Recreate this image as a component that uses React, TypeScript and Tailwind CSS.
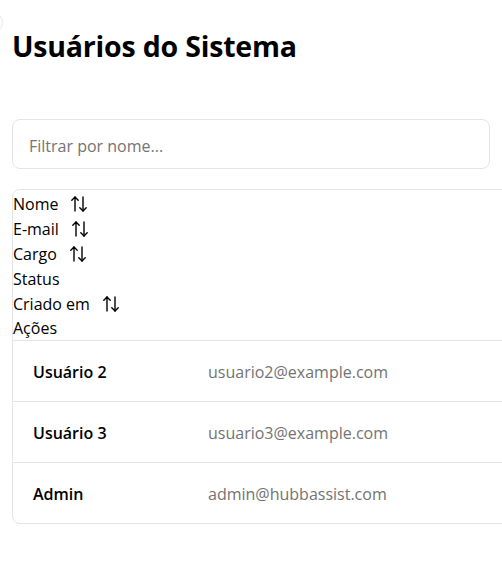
import React from 'react';

function SortIcon() {
    return (
        <svg width="18" height="18" viewBox="0 0 18 18" fill="none" stroke="currentColor" strokeWidth="1.4" strokeLinecap="round" strokeLinejoin="round" className="inline-block ml-3 -mt-1">
            <path d="M5 16V2" />
            <path d="M1.8 5.2 5 2l3.2 3.2" />
            <path d="M13 2v14" />
            <path d="M9.8 12.8 13 16l3.2-3.2" />
        </svg>
    );
}

const users = [
    { name: 'Usuário 2', email: 'usuario2@example.com' },
    { name: 'Usuário 3', email: 'usuario3@example.com' },
    { name: 'Admin', email: 'admin@hubbassist.com' },
];

const columns = [
    { label: 'Nome', sortable: true },
    { label: 'E-mail', sortable: true },
    { label: 'Cargo', sortable: true },
    { label: 'Status', sortable: false },
    { label: 'Criado em', sortable: true },
    { label: 'Ações', sortable: false },
];

export default function App() {
    return (
        <div className="relative min-h-screen bg-white overflow-hidden text-black" style={{ fontFamily: '"Open Sans", "Noto Sans", sans-serif' }}>
            {/* botão cortado na borda */}
            <div className="absolute -left-[18px] top-[12px] w-[21px] h-[21px] rounded-full border border-gray-200" />

            <div className="px-3 pt-[24px]">
                <h1 className="text-[28.5px] font-bold leading-[44px] tracking-[-0.2px]">Usuários do Sistema</h1>

                <div className="mt-[51px]">
                    <input
                        type="text"
                        placeholder="Filtrar por nome..."
                        className="w-full h-[50px] px-4 pt-[3px] rounded-lg border border-[#e5e5e5] text-base placeholder:text-[#737373] outline-none"
                    />
                </div>

                {/* Tabela */}
                <div className="mt-[20px] w-[620px] border border-[#e5e5e5] rounded-lg">
                    <div className="border-b border-[#e5e5e5] pt-[2px]">
                        {columns.map((c, i) => (
                            <div key={c.label} className={`text-base ${i === columns.length - 1 ? 'leading-[23px]' : 'leading-[25px]'}`}>
                                {c.label}
                                {c.sortable && <SortIcon />}
                            </div>
                        ))}
                    </div>
                    {users.map((u, i) => (
                        <div key={u.email} className={`flex items-center pt-[2px] ${i < users.length - 1 ? 'h-[61px] border-b border-[#e5e5e5]' : 'h-[60px]'}`}>
                            <div className="w-[175px] px-5 font-semibold text-base">{u.name}</div>
                            <div className="px-5 text-base text-[#737373]">{u.email}</div>
                        </div>
                    ))}
                </div>
            </div>
        </div>
    );
}
